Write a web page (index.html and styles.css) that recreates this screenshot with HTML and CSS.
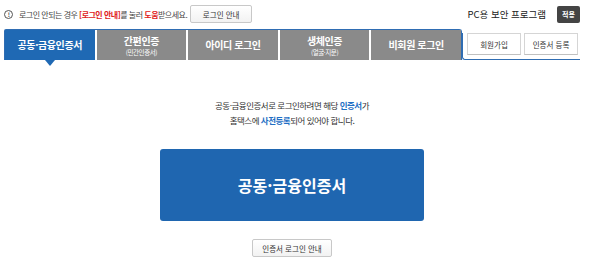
FILE: index.html
```html
<!DOCTYPE html>
<html lang="ko">
<head>
    <meta charset="UTF-8">
    <title>로그인</title>
    <link rel="stylesheet" href="styles.css">
</head>
<body>
    <div class="wrap">
        <div class="top">
            <div class="notice">
                <span class="ico">!</span>
                <span>로그인 안되는 경우 <b class="red">[로그인 안내]</b>를 눌러 <b class="red">도움</b>받으세요.</span>
                <button class="btn-sm">로그인 안내</button>
            </div>
            <div class="pc">
                <span>PC용 보안 프로그램</span>
                <button class="btn-dark">적용</button>
            </div>
        </div>

        <div class="tab-row">
            <ul class="tabs">
                <li class="on">공동·금융인증서</li>
                <li>간편인증<small>(민간인증서)</small></li>
                <li>아이디 로그인</li>
                <li>생체인증<small>(얼굴·지문)</small></li>
                <li>비회원 로그인</li>
            </ul>
            <div class="side">
                <button class="btn-side">회원가입</button>
                <button class="btn-side">인증서 등록</button>
            </div>
        </div>

        <div class="content">
            <p class="msg">공동·금융인증서로 로그인하려면 해당 <b class="blue">인증서</b>가<br>홈택스에 <b class="blue">사전등록</b>되어 있어야 합니다.</p>
            <button class="btn-big">공동·금융인증서</button>
            <button class="btn-guide">인증서 로그인 안내</button>
        </div>
    </div>
</body>
</html>
```

FILE: styles.css
```css
body {
    margin: 0;
    background: #fff;
    font-family: "Noto Sans CJK KR", "Noto Sans", sans-serif;
    color: #333;
}
.wrap {
    width: 576px;
    margin-left: 4px;
}
button {
    font-family: inherit;
    cursor: pointer;
}
.top {
    display: flex;
    align-items: center;
    justify-content: space-between;
    height: 18px;
    padding-top: 5px;
    margin-bottom: 6px;
}
.notice {
    display: flex;
    align-items: center;
    font-size: 8px;
    letter-spacing: -0.5px;
    color: #444;
}
.ico {
    width: 7px;
    height: 7px;
    border: 1px solid #555;
    border-radius: 50%;
    font-size: 6px;
    font-weight: bold;
    line-height: 7px;
    text-align: center;
    margin-right: 6px;
}
.red {
    color: #e02020;
}
.btn-sm {
    margin-left: 3px;
    width: 62px;
    height: 18px;
    padding: 0;
    font-size: 7.5px;
    color: #333;
    background: linear-gradient(#fff, #f2f2f2);
    border: 1px solid #c8c8c8;
    border-radius: 2px;
}
.pc {
    display: flex;
    align-items: center;
    font-size: 9.5px;
    color: #222;
}
.btn-dark {
    margin-left: 11px;
    width: 23px;
    height: 17px;
    padding: 0;
    font-size: 7px;
    font-weight: bold;
    color: #fff;
    background: #444;
    border: none;
    border-radius: 2px;
}
.tab-row {
    display: flex;
    align-items: flex-end;
}
.tabs {
    display: flex;
    list-style: none;
    margin: 0;
    padding: 0;
    width: 457px;
    height: 30px;
    border: 1px solid #2f6db3;
    border-bottom: none;
    border-radius: 2px 3px 0 0;
}
.tabs li {
    position: relative;
    flex: 1;
    display: flex;
    flex-direction: column;
    justify-content: center;
    align-items: center;
    background: #8a8a8a;
    border-left: 2px solid #fff;
    color: #fff;
    font-size: 10px;
    font-weight: bold;
    line-height: 12px;
    letter-spacing: -0.4px;
}
.tabs li:first-child {
    border-left: none;
}
.tabs li small {
    margin-top: 1px;
    font-size: 6.5px;
    font-weight: normal;
    line-height: 8px;
}
.tabs li.on {
    background: #1f69b4;
}
.tabs li.on::after {
    content: "";
    position: absolute;
    left: 50%;
    bottom: -6px;
    transform: translateX(-50%);
    border-left: 5px solid transparent;
    border-right: 5px solid transparent;
    border-top: 6px solid #1f69b4;
}
.side {
    display: flex;
    gap: 3px;
    padding: 0 2px 4px 4px;
    height: 22px;
    border-bottom: 1px solid #2f6db3;
    border-left: 1px solid #2f6db3;
    border-bottom-left-radius: 3px;
}
.btn-side {
    width: 54px;
    height: 22px;
    padding: 0;
    font-size: 7.5px;
    color: #333;
    background: #fff;
    border: 1px solid #d5d5d5;
    border-bottom-color: #c0c0c0;
}
.content {
    display: flex;
    flex-direction: column;
    align-items: center;
    padding-top: 38px;
}
.msg {
    margin: 0;
    font-size: 8.5px;
    line-height: 15px;
    text-align: center;
    letter-spacing: -0.5px;
    color: #333;
}
.blue {
    color: #1f6fc4;
}
.btn-big {
    margin-top: 21px;
    width: 264px;
    height: 72px;
    padding: 0;
    font-size: 16px;
    font-weight: bold;
    color: #fff;
    background: #1f66b0;
    border: none;
    border-radius: 3px;
}
.btn-guide {
    margin-top: 18px;
    width: 80px;
    height: 18px;
    padding: 0;
    font-size: 7.5px;
    color: #333;
    background: linear-gradient(#fff, #f2f2f2);
    border: 1px solid #c8c8c8;
    border-radius: 2px;
}
```
